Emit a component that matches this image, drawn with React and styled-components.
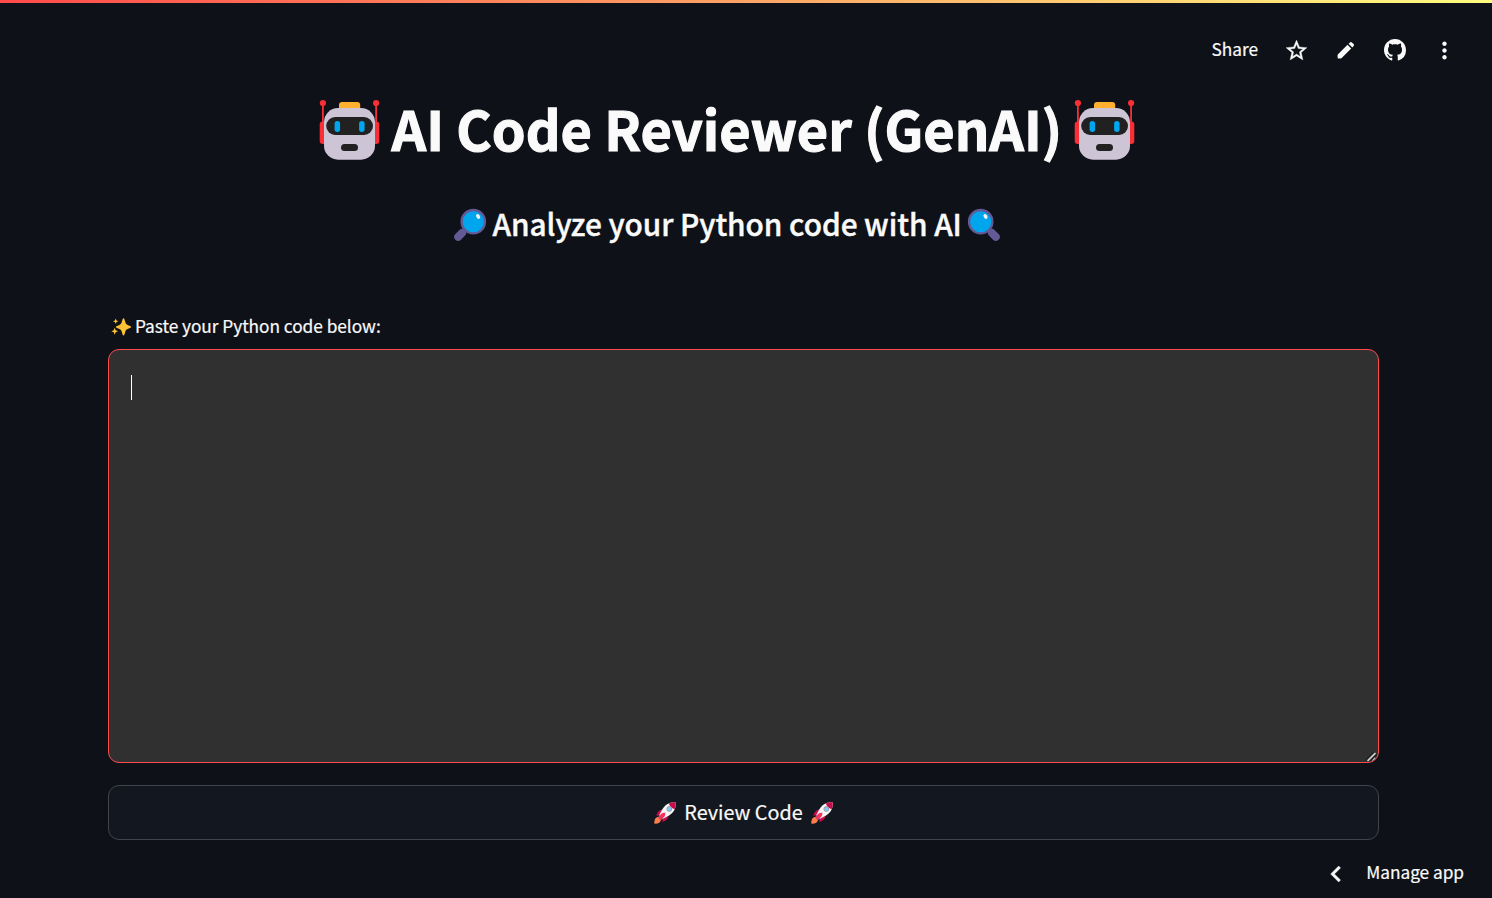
import React from "react";
import styled, { createGlobalStyle } from "styled-components";
import { MdMoreVert } from "react-icons/md";

const GlobalStyle = createGlobalStyle`
  * { box-sizing: border-box; }
  body {
    margin: 0;
    background: #0e1117;
    color: #fafafa;
    font-family: "Noto Sans CJK SC", "Noto Sans", sans-serif;
    overflow: hidden;
  }
  svg { display: block; flex: none; }
`;

const Page = styled.div`
  height: 898px;
  display: flex;
  flex-direction: column;
`;

const Decoration = styled.div`
  height: 3px;
  flex: none;
  background: linear-gradient(90deg, #ff4b4b, #fffd80);
`;

const Text = styled.span`
  font-size: ${(p) => p.$size}px;
  font-weight: ${(p) => p.$weight || 400};
  letter-spacing: ${(p) => p.$spacing || 0}px;
  line-height: 1;
  padding-bottom: 2px;
  white-space: pre;
  -webkit-text-stroke: ${(p) => p.$stroke || 0.2}px currentColor;
`;

const Toolbar = styled.header`
  height: 94px;
  flex: none;
  display: flex;
  justify-content: flex-end;
  align-items: center;
  padding-right: 22.5px;
`;

const ShareButton = styled.div`
  width: 60px;
  flex: none;
  display: flex;
`;

const IconButton = styled.div`
  width: 49.5px;
  display: flex;
  justify-content: center;
`;

const Title = styled.h1`
  margin: 0 0 0 319px;
  height: 65px;
  flex: none;
  display: flex;
  align-items: center;
`;

const TitleText = styled.div`
  width: 694px;
  padding-left: 11.5px;
  display: flex;
`;

const Subtitle = styled.h2`
  margin: 45px 0 0 453px;
  height: 36px;
  flex: none;
  display: flex;
  align-items: center;
`;

const SubtitleText = styled.div`
  width: 480px;
  padding-left: 5.5px;
  display: flex;
`;

const Form = styled.main`
  margin: 70px 0 0 108px;
  width: 1271px;
  flex: none;
  display: flex;
  flex-direction: column;
`;

const Label = styled.label`
  height: 28px;
  padding-left: 3px;
  display: flex;
  align-items: center;
  gap: 3px;
`;

const Editor = styled.div`
  height: 414px;
  margin-top: 8px;
  border: 1px solid #ff4b4b;
  border-radius: 11px;
  background: #303030;
  display: flex;
  justify-content: space-between;
  overflow: hidden;
`;

const Caret = styled.div`
  width: 1px;
  height: 25px;
  margin: 25px 0 0 22px;
  background: #fff;
`;

const Grip = styled.svg`
  align-self: flex-end;
`;

const ReviewButton = styled.div`
  height: 55px;
  margin-top: 22px;
  border: 1px solid #41444c;
  border-radius: 11px;
  background: #131720;
  display: flex;
  align-items: center;
  justify-content: center;
  gap: 7.5px;
`;

const Footer = styled.footer`
  height: 58px;
  padding: 8px 28px 0 0;
  display: flex;
  align-items: center;
  justify-content: flex-end;
  gap: 14.5px;
`;

const CollapseIcon = styled.svg`
  margin-top: 2px;
`;

function Robot() {
  return (
    <svg width="61" height="62" viewBox="0 0 61 62">
      <g fill="#f92f35">
        <rect x="0.7" y="22.5" width="10" height="22.5" rx="3" />
        <rect x="50.3" y="22.5" width="10" height="22.5" rx="3" />
        <rect x="3" y="4" width="1.8" height="24" />
        <rect x="56.2" y="4" width="1.8" height="24" />
        <circle cx="3.9" cy="4" r="3.1" />
        <circle cx="57.1" cy="4" r="3.1" />
      </g>
      <rect x="20" y="3" width="21.2" height="12" rx="3" fill="#ffb02e" />
      <rect x="5" y="9.1" width="51" height="51.6" rx="14" fill="#cdc4d6" />
      <rect x="7.2" y="18" width="46.8" height="18" rx="9" fill="#212121" />
      <rect x="15.6" y="22" width="5.5" height="11" rx="2.75" fill="#00a6ed" />
      <rect x="40.1" y="22" width="5.5" height="11" rx="2.75" fill="#00a6ed" />
      <rect x="22" y="45" width="17" height="7" rx="3.5" fill="#212121" />
    </svg>
  );
}

function Magnifier({ right }) {
  const cx = right ? 13.7 : 20.3;
  return (
    <svg width="34" height="34" viewBox="0 0 34 34">
      <path
        d={right ? "M22 22L29 29.2" : "M12 22L5 29.2"}
        stroke="#635994" strokeWidth="4" strokeLinecap="round"
      />
      <path
        d={right ? "M25 25L28.8 28.8" : "M9 25L5.2 28.8"}
        stroke="#635994" strokeWidth="8" strokeLinecap="round"
      />
      <circle cx={cx} cy="13.7" r="11.7" fill="#00a6ed" stroke="#635994" strokeWidth="2.3" />
      <ellipse cx={cx + 4.8} cy="8.4" rx="1.8" ry="2.6" fill="#f4f4f4" transform={`rotate(-30 ${cx + 4.8} 8.4)`} />
    </svg>
  );
}

function Star() {
  return (
    <svg width="25" height="25" viewBox="0 0 24 24" fill="currentColor" stroke="currentColor" strokeWidth="0.35">
      <path d="M22 9.24l-7.19-.62L12 2 9.19 8.63 2 9.24l5.46 4.73L5.82 21 12 17.27 18.18 21l-1.63-7.03L22 9.24zM12 15.4l-3.76 2.27 1-4.28-3.32-2.88 4.38-.38L12 6.1l1.71 4.04 4.38.38-3.32 2.88 1 4.28L12 15.4z" />
    </svg>
  );
}

function Pencil() {
  return (
    <svg width="18" height="18" viewBox="0 0 18 18" fill="currentColor">
      <path d="M1 13.3L10.5 3.8L14.2 7.5L4.7 17Q4.3 17.4 3.7 17.4H1.5Q.6 17.4 .6 16.5V14.3Q.6 13.7 1 13.3Z" />
      <path d="M11.6 2.7L12.9 1.4Q13.9 .4 14.9 1.4L16.6 3.1Q17.6 4.1 16.6 5.1L15.3 6.4Z" />
    </svg>
  );
}

function GithubMark() {
  return (
    <svg width="22" height="22" viewBox="0 0 16 16" fill="currentColor">
      <path d="M8 0C3.58 0 0 3.58 0 8c0 3.54 2.29 6.53 5.47 7.59.4.07.55-.17.55-.38 0-.19-.01-.82-.01-1.49-2.01.37-2.53-.49-2.69-.94-.09-.23-.48-.94-.82-1.13-.28-.15-.68-.52-.01-.53.63-.01 1.08.58 1.23.82.72 1.21 1.87.87 2.33.66.07-.52.28-.87.51-1.07-1.78-.2-3.64-.89-3.64-3.95 0-.87.31-1.59.82-2.15-.08-.2-.36-1.02.08-2.12 0 0 .67-.21 2.2.82.64-.18 1.32-.27 2-.27s1.36.09 2 .27c1.53-1.04 2.2-.82 2.2-.82.44 1.1.16 1.92.08 2.12.51.56.82 1.27.82 2.15 0 3.07-1.87 3.75-3.65 3.95.29.25.54.73.54 1.48 0 1.07-.01 1.93-.01 2.2 0 .21.15.46.55.38A8.01 8.01 0 0 0 16 8c0-4.42-3.58-8-8-8z" />
    </svg>
  );
}

function Sparkles() {
  return (
    <svg width="21" height="20" viewBox="0 0 21 20" fill="#fcc236">
      <path d="M12.5 1.2Q13.1 1.2 13.5 2.6L14.5 5.7Q15 7.3 16.6 7.9L19 8.9Q20.2 9.4 20.2 9.9T19 10.9L16.6 11.9Q15 12.5 14.5 14.1L13.5 17.2Q13.1 18.6 12.5 18.6T11.5 17.2L10.5 14.1Q10 12.5 8.4 11.9L6 10.9Q4.8 10.4 4.8 9.9T6 8.9L8.4 7.9Q10 7.3 10.5 5.7L11.5 2.6Q11.9 1.2 12.5 1.2Z" />
      <path d="M4.7 1.5L5.5 3.5L7.5 4.3L5.5 5.1L4.7 7.1L3.9 5.1L1.9 4.3L3.9 3.5Z" />
      <path d="M3.7 10.8L4.7 13.3L7.1 14.3L4.7 15.3L3.7 17.7L2.7 15.3L.4 14.3L2.7 13.3Z" />
    </svg>
  );
}

function Rocket() {
  return (
    <svg width="24" height="24" viewBox="0 0 24 24">
      <path d="M5.5 16C2.4 16 1.5 18 1.2 22.6C5 22.8 7.6 22 8 18.8Z" fill="#ff7d4d" />
      <path d="M10 8.5C6.5 8.5 4 11 3.4 14.8L8 14ZM15.5 14C15.5 17.5 13.2 20.2 9.2 21L10 16Z" fill="#ca0b4a" />
      <path d="M5.2 15.2L8.6 18.9L10.5 17.5L6.8 13.6Z" fill="#635994" />
      <path d="M22.8 1.3C16 .8 12 4 9.5 8L6.3 14L10 17.8L16 14.5C20 12 23.3 8 22.8 1.3Z" fill="#f4f4f4" />
      <path d="M22.8 1.3Q18.8 1 15.9 2.4Q17 6.5 21.6 8.2Q23.2 5.3 22.8 1.3Z" fill="#ca0b4a" />
      <path d="M12.3 11.8Q8 11 5.5 17.2L7 18.6Q13 16.2 12.3 11.8Z" fill="#f8315d" />
      <circle cx="16.3" cy="8" r="2.4" fill="#83cbff" stroke="#9b9b9b" strokeWidth="1" />
    </svg>
  );
}

export default function App() {
  return (
    <>
      <GlobalStyle />
      <Page>
        <Decoration />
        <Toolbar>
          <ShareButton><Text $size={17.3}>Share</Text></ShareButton>
          <IconButton><Star /></IconButton>
          <IconButton><Pencil /></IconButton>
          <IconButton><GithubMark /></IconButton>
          <IconButton><MdMoreVert size={27} /></IconButton>
        </Toolbar>
        <Title>
          <Robot />
          <TitleText><Text $size={54.1} $weight={700} $stroke={1.1}>AI Code Reviewer (GenAI)</Text></TitleText>
          <Robot />
        </Title>
        <Subtitle>
          <Magnifier />
          <SubtitleText><Text $size={29.8} $weight={500} $stroke={0.4} $spacing={-0.05}>Analyze your Python code with AI</Text></SubtitleText>
          <Magnifier right />
        </Subtitle>
        <Form>
          <Label>
            <Sparkles />
            <Text $size={17.3} $spacing={-0.04}>Paste your Python code below:</Text>
          </Label>
          <Editor>
            <Caret />
            <Grip width="12" height="12" viewBox="0 0 12 12">
              <path d="M1.5 11L9.5 3M6.5 11L9.5 8" stroke="#111" strokeWidth="4" />
              <path d="M1.5 11L9.5 3M6.5 11L9.5 8" stroke="#c8c8c8" strokeWidth="1.8" />
            </Grip>
          </Editor>
          <ReviewButton>
            <Rocket />
            <Text $size={19.8}>Review Code</Text>
            <Rocket />
          </ReviewButton>
        </Form>
        <Footer>
          <CollapseIcon width="32" height="32" viewBox="0 0 24 24" fill="currentColor" stroke="currentColor" strokeWidth="0.3">
            <path d="M15.41 7.41L14 6l-6 6 6 6 1.41-1.41L10.83 12z" />
          </CollapseIcon>
          <Text $size={17.3} $spacing={-0.04}>Manage app</Text>
        </Footer>
      </Page>
    </>
  );
}
